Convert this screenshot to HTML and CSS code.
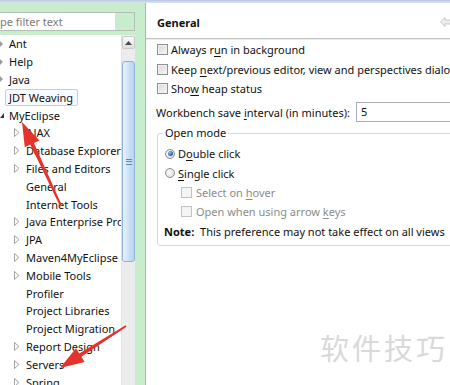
FILE: index.html
```html
<!DOCTYPE html>
<html>
<head>
<meta charset="utf-8">
<link rel="stylesheet" href="styles.css">
</head>
<body>
<div class="chrome"></div>
<div class="main">
  <aside class="left">
    <div class="filter"><span class="ph">pe filter text</span><span class="clr"></span></div>
    <div class="treearea">
      <ul class="tree">
        <li class="row l1"><span class="tw0"><svg width="3" height="6"><path d="M0 0 L3 3 L0 6Z" fill="#9c9c9c"/></svg></span>Ant</li>
        <li class="row l1"><span class="tw0"><svg width="3" height="6"><path d="M0 0 L3 3 L0 6Z" fill="#9c9c9c"/></svg></span>Help</li>
        <li class="row l1"><span class="tw0"><svg width="3" height="6"><path d="M0 0 L3 3 L0 6Z" fill="#9c9c9c"/></svg></span>Java</li>
        <li class="row l1 sel"><span class="selbox">JDT Weaving</span></li>
        <li class="row l1"><span class="tw0"><svg width="4" height="5"><path d="M4 0 L4 5 L0 5Z" fill="#333"/></svg></span>MyEclipse</li>
        <li class="row l2"><span class="tw"><svg width="6" height="9"><path d="M0.5 0.5 L5 4.5 L0.5 8.5Z" fill="none" stroke="#a4a4a4"/></svg></span>AJAX</li>
        <li class="row l2"><span class="tw"><svg width="6" height="9"><path d="M0.5 0.5 L5 4.5 L0.5 8.5Z" fill="none" stroke="#a4a4a4"/></svg></span>Database Explorer</li>
        <li class="row l2"><span class="tw"><svg width="6" height="9"><path d="M0.5 0.5 L5 4.5 L0.5 8.5Z" fill="none" stroke="#a4a4a4"/></svg></span>Files and Editors</li>
        <li class="row l2 leaf">General</li>
        <li class="row l2 leaf">Internet Tools</li>
        <li class="row l2"><span class="tw"><svg width="6" height="9"><path d="M0.5 0.5 L5 4.5 L0.5 8.5Z" fill="none" stroke="#a4a4a4"/></svg></span>Java Enterprise Project</li>
        <li class="row l2"><span class="tw"><svg width="6" height="9"><path d="M0.5 0.5 L5 4.5 L0.5 8.5Z" fill="none" stroke="#a4a4a4"/></svg></span>JPA</li>
        <li class="row l2"><span class="tw"><svg width="6" height="9"><path d="M0.5 0.5 L5 4.5 L0.5 8.5Z" fill="none" stroke="#a4a4a4"/></svg></span>Maven4MyEclipse</li>
        <li class="row l2"><span class="tw"><svg width="6" height="9"><path d="M0.5 0.5 L5 4.5 L0.5 8.5Z" fill="none" stroke="#a4a4a4"/></svg></span>Mobile Tools</li>
        <li class="row l2 leaf">Profiler</li>
        <li class="row l2 leaf">Project Libraries</li>
        <li class="row l2 leaf">Project Migration</li>
        <li class="row l2"><span class="tw"><svg width="6" height="9"><path d="M0.5 0.5 L5 4.5 L0.5 8.5Z" fill="none" stroke="#a4a4a4"/></svg></span>Report Design</li>
        <li class="row l2"><span class="tw"><svg width="6" height="9"><path d="M0.5 0.5 L5 4.5 L0.5 8.5Z" fill="none" stroke="#a4a4a4"/></svg></span>Servers</li>
        <li class="row l2"><span class="tw"><svg width="6" height="9"><path d="M0.5 0.5 L5 4.5 L0.5 8.5Z" fill="none" stroke="#a4a4a4"/></svg></span>Spring</li>
      </ul>
      <div class="vscroll">
        <div class="up"><svg width="7" height="4"><path d="M0 4 L3.5 0 L7 4Z" fill="#4a4a4a"/></svg></div>
        <div class="thumb"><span class="grip"></span></div>
      </div>
    </div>
  </aside>
  <section class="right">
    <header class="head">
      <h1>General</h1>
      <svg class="back" width="12" height="10" viewBox="0 0 12 10"><path d="M0.5 5 L5 0.5 L5 3 L11.5 3 L11.5 7 L5 7 L5 9.5Z" fill="#ececec" stroke="#c9c9c9"/></svg>
    </header>
    <div class="body">
      <div class="opt"><span class="cb"></span><span>Always r<u>u</u>n in background</span></div>
      <div class="opt"><span class="cb"></span><span>Keep <u>n</u>ext/previous editor, view and perspectives dialog</span></div>
      <div class="opt"><span class="cb"></span><span>Sho<u>w</u> heap status</span></div>
      <div class="interval"><label class="lbl">Workbench save <u>i</u>nterval (in minutes):</label><span class="field">5</span></div>
      <fieldset class="group">
        <legend>Open mode</legend>
        <div class="gopt"><span class="rb on"></span><span>D<u>o</u>uble click</span></div>
        <div class="gopt"><span class="rb"></span><span><u>S</u>ingle click</span></div>
        <div class="gopt sub dis"><span class="cb"></span><span>Select on <u>h</u>over</span></div>
        <div class="gopt sub dis"><span class="cb"></span><span>Open when using arrow <u>k</u>eys</span></div>
        <div class="gopt note"><b>Note:</b>&nbsp;This preference may not take effect on all views</div>
      </fieldset>
    </div>
  </section>
</div>
<svg class="annot" width="450" height="385" viewBox="0 0 450 385">
  <polygon fill="#e5322d" points="22,122 39.4,140.4 33.9,143 61.9,205.6 60.1,206.4 30.3,144.6 24.8,147.2"/>
  <polygon fill="#e5322d" points="60,368 84.6,361.9 81.4,356.8 126.5,326.8 125.5,325.2 79.2,353.4 76,348.3"/>
</svg>
<div class="wm">软件技巧</div>
</body>
</html>
```
FILE: styles.css
```css
* { box-sizing: border-box; }
html, body { margin: 0; padding: 0; }
body {
  width: 450px;
  height: 385px;
  overflow: hidden;
  position: relative;
  background: #fff;
  color: #111;
  font-family: "Noto Sans", "DejaVu Sans", sans-serif;
  font-size: 11px;
}
u { text-decoration-thickness: 1px; text-underline-offset: 2px; }

.chrome { height: 3px; background: linear-gradient(#b7cadd, #dce7f1); }
.main { display: flex; height: 382px; }

/* left side */
.left {
  width: 146px;
  flex: none;
  background: #c7edcc;
  border-right: 1px solid #a7bcab;
  display: flex;
  flex-direction: column;
  padding-top: 9px;
}
.filter {
  height: 19px;
  width: 135px;
  display: flex;
  background: #fff;
  border: 1px solid #b3bfb5;
  border-left: none;
  margin-bottom: 4px;
}
.filter .ph { flex: 1; color: #7a7a7a; line-height: 17px; white-space: nowrap; overflow: hidden; }
.filter .clr { width: 19px; background: #c7edcc; }

.treearea { flex: 1; display: flex; min-height: 0; }
.tree {
  list-style: none;
  margin: 0;
  padding: 0;
  width: 121px;
  flex: none;
  background: #fff;
  overflow: hidden;
}
.row {
  display: flex;
  align-items: center;
  height: 17.8px;
  white-space: nowrap;
  width: max-content;
}
.l1 { padding-left: 0; }
.tw0 { width: 9px; flex: none; display: flex; align-items: center; }
.sel { padding-left: 5px; }
.selbox {
  display: block;
  height: 17.5px;
  line-height: 15.5px;
  padding: 0 4px 0 3px;
  border: 1px solid #b6d3ea;
  border-radius: 2px;
  background: #f7fbff;
}
.l2 { padding-left: 14px; }
.l2.leaf { padding-left: 26px; }
.tw { width: 12px; flex: none; display: flex; align-items: center; }

.vscroll {
  width: 14px;
  flex: none;
  background: #ececec;
  border-left: 1px solid #e2e2e2;
  display: flex;
  flex-direction: column;
  padding-top: 1px;
}
.up {
  height: 13px;
  flex: none;
  border: 1px solid #c9c9c9;
  border-radius: 2px;
  background: linear-gradient(#fbfbfb, #dedede);
  display: flex;
  align-items: center;
  justify-content: center;
}
.thumb {
  margin-top: 12px;
  height: 201px;
  flex: none;
  border: 1px solid #8cb2d5;
  border-radius: 3px;
  background: linear-gradient(90deg, #e9f3fc, #c7def3 60%, #b9d4ed);
  display: flex;
  align-items: center;
  justify-content: center;
}
.grip {
  width: 6px;
  height: 6px;
  border-top: 1px solid #5f86b0;
  border-bottom: 1px solid #5f86b0;
  background: linear-gradient(#5f86b0, #5f86b0) center / 100% 1px no-repeat;
}

/* right side */
.right { flex: 1; min-width: 0; display: flex; flex-direction: column; }
.head {
  height: 36px;
  flex: none;
  padding: 3px 0 0 11px;
  border-bottom: 1px solid #c2c2c2;
  box-shadow: 0 1px 0 #ededed;
  display: flex;
  align-items: center;
  justify-content: space-between;
}
.head h1 { margin: 0; font-size: 11px; font-weight: 700; }
.back { margin-right: -2px; margin-top: -1px; }

.body { padding: 1px 0 0 11px; }
.opt { display: flex; align-items: center; gap: 3px; height: 19.5px; white-space: nowrap; }
.cb {
  width: 11px;
  height: 11px;
  flex: none;
  border: 1px solid #8f9090;
  background: linear-gradient(135deg, #d9d9d9, #f5f5f5);
  box-shadow: inset 0 0 0 1px #f2f2f2;
}
.interval { display: flex; align-items: center; height: 20px; margin-top: 3.5px; white-space: nowrap; }
.lbl { width: 200px; flex: none; margin-left: -1px; }
.field {
  width: 120px;
  height: 20px;
  flex: none;
  border: 1px solid #abadb3;
  border-right: none;
  padding-left: 4px;
  line-height: 18px;
}

.group {
  margin: 3px 0 0 0;
  width: 320px;
  min-width: 0;
  border: 1px solid #d6d9dc;
  border-radius: 3px;
  padding: 0 7px 4px 7px;
}
.group legend { padding: 0 2px; margin-left: -2px; line-height: 16px; }
.gopt { display: flex; align-items: center; gap: 3px; height: 19.3px; white-space: nowrap; }
.gopt:first-of-type { margin-top: 3.3px; }
.rb {
  width: 10px;
  height: 10px;
  flex: none;
  border-radius: 50%;
  border: 1px solid #8d8f91;
  background: radial-gradient(circle at 40% 40%, #fdfdfd, #d6d6d6);
  display: flex;
  align-items: center;
  justify-content: center;
}
.rb.on::after {
  content: "";
  width: 5px;
  height: 5px;
  border-radius: 50%;
  background: radial-gradient(circle at 35% 35%, #8fc1f0, #2358a8 70%);
}
.sub { padding-left: 16px; gap: 4px; }
.dis { color: #8c8c8c; }
.dis .cb { border-color: #c3c3c3; background: #f4f4f4; box-shadow: none; }
.note { margin-left: -1px; }

.annot { position: absolute; left: 0; top: 0; pointer-events: none; }
.wm {
  position: absolute;
  left: 320px;
  top: 333px;
  font-family: "Noto Sans CJK SC", sans-serif;
  font-size: 29px;
  letter-spacing: 3px;
  line-height: 1;
  color: #d9d9d9;
  white-space: nowrap;
}
```
